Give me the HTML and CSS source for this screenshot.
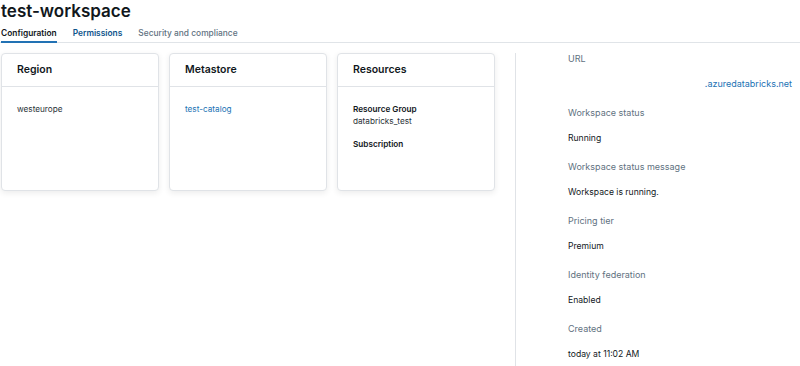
FILE: index.html
```html
<!DOCTYPE html>
<html lang="en">
<head>
    <meta charset="UTF-8">
    <title>test-workspace</title>
    <link rel="stylesheet" href="styles.css">
</head>
<body>
    <div class="page">
        <h1 class="title">test-workspace</h1>

        <div class="tabs">
            <span class="tab active">Configuration</span>
            <span class="tab link">Permissions</span>
            <span class="tab">Security and compliance</span>
        </div>

        <div class="content">
            <div class="cards">
                <div class="card">
                    <div class="card-head">Region</div>
                    <div class="card-body">westeurope</div>
                </div>
                <div class="card">
                    <div class="card-head">Metastore</div>
                    <div class="card-body"><a href="#" class="link-text">test-catalog</a></div>
                </div>
                <div class="card">
                    <div class="card-head">Resources</div>
                    <div class="card-body">
                        <div class="field-name">Resource Group</div>
                        <div>databricks_test</div>
                        <div class="field-name spaced">Subscription</div>
                    </div>
                </div>
            </div>

            <div class="details">
                <div class="label">URL</div>
                <div class="value url"><a href="#" class="link-text">.azuredatabricks.net</a></div>

                <div class="label">Workspace status</div>
                <div class="value">Running</div>

                <div class="label">Workspace status message</div>
                <div class="value">Workspace is running.</div>

                <div class="label">Pricing tier</div>
                <div class="value">Premium</div>

                <div class="label">Identity federation</div>
                <div class="value">Enabled</div>

                <div class="label">Created</div>
                <div class="value">today at 11:02 AM</div>
            </div>
        </div>
    </div>
</body>
</html>
```

FILE: styles.css
```css
* {
    margin: 0;
    padding: 0;
    box-sizing: border-box;
}

body {
    font-family: Inter, "Noto Sans", sans-serif;
    background-color: #fff;
    color: #1f272d;
    overflow: hidden;
}

.page {
    padding-left: 1px;
}

.title {
    font-size: 17px;
    font-weight: 600;
    line-height: 22px;
    color: #11171c;
}

.tabs {
    display: flex;
    gap: 16px;
    margin-top: 5px;
    border-bottom: 1px solid #e0e4e8;
    margin-left: -1px;
    padding-left: 1px;
}

.tab {
    font-size: 8.4px;
    line-height: 13px;
    padding-bottom: 1px;
    color: #5f7281;
    font-weight: 500;
}

.tab.active {
    color: #11171c;
    font-weight: 600;
    border-bottom: 2px solid #2272b4;
    margin-bottom: -1px;
}

.tab.link {
    color: #0e538b;
    font-weight: 600;
}

.content {
    display: flex;
    margin-top: 10px;
}

.cards {
    display: flex;
    gap: 10px;
    width: 514px;
    align-items: flex-start;
}

.card {
    width: 158px;
    height: 138px;
    border: 1px solid #e0e3e7;
    border-radius: 4px;
    box-shadow: 0 2px 6px rgba(0, 0, 0, 0.08);
    background-color: #fff;
}

.card-head {
    height: 33px;
    padding: 9px 15px 0;
    font-size: 10.5px;
    line-height: 13px;
    font-weight: 600;
    color: #11171c;
    border-bottom: 1px solid #e0e3e7;
}

.card-body {
    padding: 16px 15px;
    font-size: 8.2px;
    line-height: 12px;
    color: #2a3238;
}

.field-name {
    font-weight: 600;
    color: #11171c;
}

.field-name.spaced {
    margin-top: 11px;
}

.link-text {
    color: #2272b4;
    text-decoration: none;
}

.details {
    flex: 1;
    border-left: 1px solid #e0e3e7;
    padding: 0 8px 0 52px;
    height: 320px;
}

.label {
    font-size: 9px;
    line-height: 12px;
    color: #5f7281;
}

.value {
    font-size: 8.6px;
    line-height: 12px;
    color: #11171c;
    margin-top: 13px;
    margin-bottom: 17px;
}

.value.url {
    text-align: right;
    font-size: 9px;
    margin-top: 13px;
}
```
